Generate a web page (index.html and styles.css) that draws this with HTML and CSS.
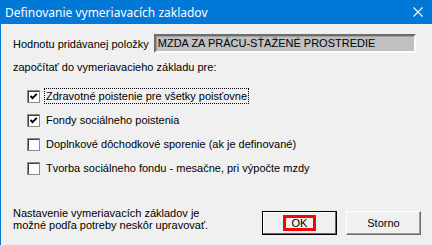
FILE: index.html
```html
<!DOCTYPE html>
<html lang="sk">
<head>
  <meta charset="UTF-8">
  <title>Definovanie vymeriavacích zakladov</title>
  <link rel="stylesheet" href="styles.css">
</head>
<body>

  <div class="okno">
    <div class="titulok">
      <span>Definovanie vymeriavacích zakladov</span>
      <svg class="zavriet" width="10" height="10" viewBox="0 0 10 10">
        <path d="M0.5 0.5 L9.5 9.5 M9.5 0.5 L0.5 9.5" stroke="#fff" stroke-width="1.1" fill="none"/>
      </svg>
    </div>

    <div class="obsah">
      <div class="riadok">
        <label>Hodnotu pridávanej položky</label>
        <div class="pole">MZDA ZA PRÁCU-SŤAŽENÉ PROSTREDIE</div>
      </div>

      <div class="popis">započítať do vymeriavacieho základu pre:</div>

      <div class="zoznam">
        <div class="volba">
          <span class="box zaskrtnute"></span>
          <span class="text fokus">Zdravotné poistenie pre všetky poisťovne</span>
        </div>
        <div class="volba">
          <span class="box zaskrtnute"></span>
          <span class="text">Fondy sociálneho poistenia</span>
        </div>
        <div class="volba">
          <span class="box"></span>
          <span class="text">Doplnkové dôchodkové sporenie (ak je definované)</span>
        </div>
        <div class="volba">
          <span class="box"></span>
          <span class="text">Tvorba sociálneho fondu - mesačne, pri výpočte mzdy</span>
        </div>
      </div>

      <div class="spodok">
        <div class="poznamka">Nastavenie vymeriavacích základov je<br>možné podľa potreby neskôr upravovať.</div>
        <button class="tlacidlo predvolene"><span class="oznacenie">OK</span></button>
        <button class="tlacidlo">Storno</button>
      </div>
    </div>
  </div>

</body>
</html>
```

FILE: styles.css
```css
body {
  margin: 0;
  font-family: "Liberation Sans", Arial, sans-serif;
  font-size: 11px;
  color: #000;
}

.okno {
  width: 431px;
  height: 245px;
  border-left: 1px solid #0078d7;
  background-color: #f0f0f0;
  display: flex;
  flex-direction: column;
}

.titulok {
  height: 24px;
  background-color: #0078d7; /* modrá lišta */
  color: #fff;
  font-family: "Noto Sans", sans-serif;
  font-size: 12px;
  display: flex;
  align-items: center;
  justify-content: space-between;
  padding: 0 9px 0 4px;
}

.obsah {
  flex: 1;
  display: flex;
  flex-direction: column;
  padding: 10px 11px 10px 12px;
}

.riadok {
  display: flex;
  align-items: center;
  gap: 5px;
}

.pole {
  flex: 1;
  height: 15px;
  line-height: 15px;
  padding-left: 2px;
  background-color: #c0c0c0;
  border: 2px solid;
  border-color: #6d6d6d #fff #fff #6d6d6d;
  box-shadow: inset 1px 1px 0 #a0a0a0;
  margin-right: 5px;
}

.popis {
  margin-top: 7px;
  line-height: 14px;
}

.zoznam {
  margin-top: 14px;
  padding-left: 14px;
  display: flex;
  flex-direction: column;
  gap: 8px;
}

.volba {
  height: 16px;
  display: flex;
  align-items: center;
  gap: 4px;
}

.box {
  width: 11px;
  height: 11px;
  background: #fff;
  border: 1px solid #8a8a8a;
  box-shadow: inset 1px 1px 0 #404040;
}

.zaskrtnute {
  background: #fff url("data:image/svg+xml,%3Csvg xmlns='http://www.w3.org/2000/svg' width='11' height='11'%3E%3Cpath d='M2.5 5 L4.5 7.2 L8.8 2.8' stroke='%23000' stroke-width='1.9' fill='none'/%3E%3C/svg%3E") no-repeat center;
}

.text {
  padding: 1px 1px;
  border: 1px solid transparent;
}

.fokus {
  border: 1px dotted #000;
}

.spodok {
  margin-top: auto;
  display: flex;
  align-items: flex-end;
}

.poznamka {
  flex: 1;
  line-height: 12px;
  margin-bottom: 4px;
}

.tlacidlo {
  width: 75px;
  height: 24px;
  margin-left: 9px;
  font-family: "Liberation Sans", Arial, sans-serif;
  font-size: 11px;
  color: #000;
  background-color: #f0f0f0;
  border: 1px solid;
  border-color: #fff #696969 #696969 #fff;
  box-shadow: inset -1px -1px 0 #a0a0a0;
  padding: 0;
}

.predvolene {
  border: 1px solid #000;
  box-shadow: inset -1px -1px 0 #696969, inset 1px 1px 0 #fff;
}

.oznacenie {
  display: inline-block;
  width: 27px;
  height: 10px;
  line-height: 10px;
  border: 3px solid #ff0000;
}
```
